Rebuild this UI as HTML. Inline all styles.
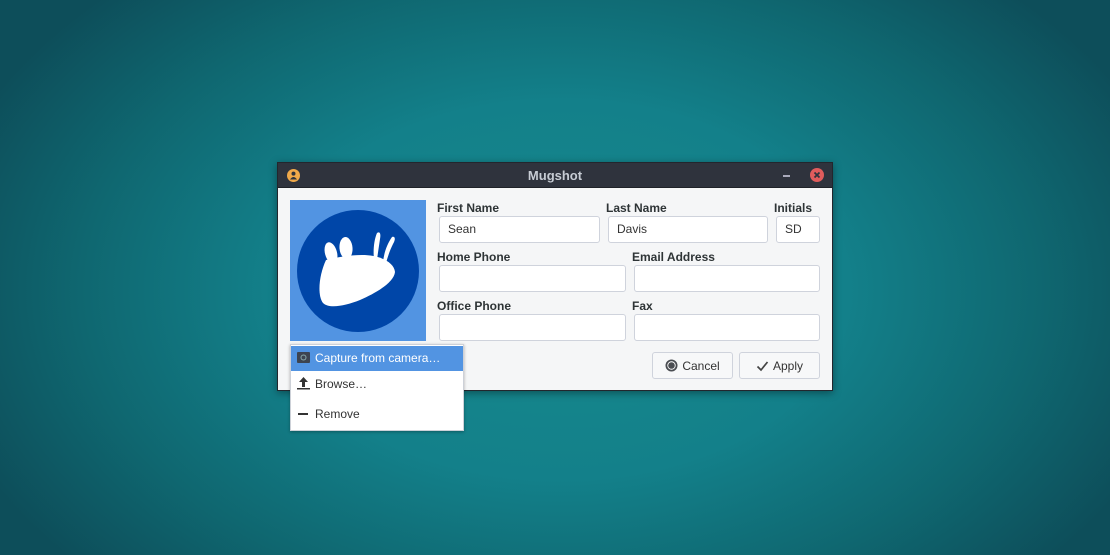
<!DOCTYPE html>
<html><head><style>
*{margin:0;padding:0;box-sizing:border-box}
body{width:1110px;height:555px;overflow:hidden;position:relative;font-family:"Liberation Sans",sans-serif;
background:radial-gradient(ellipse 640px 420px at 560px 290px,#178a8d 0%,#13808a 45%,#0f6770 75%,#0d4e5a 100%);}
.win{position:absolute;left:277px;top:162px;width:556px;height:229px;background:#f5f6f7;border:1px solid #23262d;box-shadow:0 2px 8px rgba(0,0,0,.4)}
.tb{position:absolute;left:0;top:0;width:554px;height:25px;background:#2f333d;border-bottom:1px solid #1f2228}
.tb .t{position:absolute;left:0;width:100%;top:5px;text-align:center;color:#c7ccd4;font-weight:bold;font-size:13px}
.l{position:absolute;font-size:12px;font-weight:bold;color:#2e3436}
.i{position:absolute;background:#fff;border:1px solid #cfd3dc;border-radius:3px;font-size:12px;color:#333;padding:5px 8px;height:27px}
.b{position:absolute;top:352px;height:27px;border:1px solid #cfd3dc;border-radius:3px;background:#f7f8f9;font-size:12px;color:#333;display:flex;align-items:center;justify-content:center;gap:4px}
.menu{position:absolute;left:290px;top:344px;width:174px;height:87px;background:#fff;border:1px solid #cdd1d8;box-shadow:0 1px 3px rgba(0,0,0,.3)}
.mi{position:absolute;left:0;width:172px;height:24px;font-size:12px;color:#333;padding:5px 0 0 24px}
</style></head><body>
<div class="win">
<div class="tb"><div class="t">Mugshot</div>
<svg style="position:absolute;left:9px;top:6px" width="13" height="13" viewBox="0 0 13 13"><circle cx="6.5" cy="6.5" r="6.5" fill="#f0a94a"/><circle cx="6.5" cy="4.6" r="2" fill="#2f333d"/><path d="M3 10.5 Q6.5 5.5 10 10.5Z" fill="#2f333d"/></svg>
<div style="position:absolute;left:505px;top:12px;width:7px;height:2px;background:#aab"></div>
<svg style="position:absolute;left:532px;top:5px" width="14" height="14" viewBox="0 0 14 14"><circle cx="7" cy="7" r="7" fill="#e05c5c"/><path d="M4.5 4.5L9.5 9.5M9.5 4.5L4.5 9.5" stroke="#2f333d" stroke-width="1.8"/></svg>
</div>
</div>
<div style="position:absolute;left:290px;top:200px;width:136px;height:141px;background:#5294e2"></div>
<svg style="position:absolute;left:290px;top:200px" width="136" height="141" viewBox="0 0 136 141">
<circle cx="68" cy="71" r="61" fill="#0046a8"/>
<ellipse cx="41" cy="53" rx="6" ry="11" transform="rotate(-15 41 53)" fill="#fff"/>
<ellipse cx="56" cy="48" rx="6.5" ry="11" transform="rotate(-5 56 48)" fill="#fff"/>
<path d="M36 60 C29 75 27 95 33 103 C39 109 55 106 70 100 C88 92 104 82 105 72 C104 62 90 55 72 55 C60 55 48 57 36 60Z" fill="#fff"/>
<path d="M84 60 C83 50 84 40 87 33 C90 31 91 34 90 39 C89 46 88 52 87 60Z" fill="#fff"/>
<path d="M93 62 C94 53 97 44 102 37 C105 36 106 39 103 44 C100 50 98 56 96 63Z" fill="#fff"/>
</svg>
<div class="l" style="left:437px;top:201px">First Name</div>
<div class="l" style="left:606px;top:201px">Last Name</div>
<div class="l" style="left:774px;top:201px">Initials</div>
<div class="i" style="left:439px;top:216px;width:161px">Sean</div>
<div class="i" style="left:608px;top:216px;width:160px">Davis</div>
<div class="i" style="left:776px;top:216px;width:44px">SD</div>
<div class="l" style="left:437px;top:250px">Home Phone</div>
<div class="l" style="left:632px;top:250px">Email Address</div>
<div class="i" style="left:439px;top:265px;width:187px"></div>
<div class="i" style="left:634px;top:265px;width:186px"></div>
<div class="l" style="left:437px;top:299px">Office Phone</div>
<div class="l" style="left:632px;top:299px">Fax</div>
<div class="i" style="left:439px;top:314px;width:187px"></div>
<div class="i" style="left:634px;top:314px;width:186px"></div>
<div class="b" style="left:652px;width:81px"><svg width="13" height="13" viewBox="0 0 13 13"><circle cx="6.5" cy="6.5" r="6" fill="#4a4d52"/><circle cx="6.5" cy="6.5" r="4.2" fill="#fff"/><circle cx="6.5" cy="6.5" r="3.3" fill="#4a4d52"/></svg>Cancel</div>
<div class="b" style="left:739px;width:81px"><svg width="13" height="12" viewBox="0 0 13 12"><path d="M1.5 6.5L5 10L11.5 2" stroke="#444" stroke-width="1.7" fill="none"/></svg>Apply</div>
<div class="menu">
<div class="mi" style="top:1px;background:#5294e2;color:#fff;height:25px">Capture from camera…</div>
<svg style="position:absolute;left:6px;top:6px" width="13" height="12" viewBox="0 0 13 12"><rect x="0" y="1" width="13" height="11" rx="1" fill="#3d4450"/><circle cx="6.5" cy="6.5" r="3" fill="#8aa"/><circle cx="6.5" cy="6.5" r="2" fill="#3d4450"/></svg>
<div class="mi" style="top:27px">Browse…</div>
<svg style="position:absolute;left:6px;top:31px" width="13" height="14" viewBox="0 0 13 14"><path d="M6.5 1L11 6H8V11H5V6H2Z" fill="#333"/><rect x="0" y="12" width="13" height="1.5" fill="#333"/></svg>
<div class="mi" style="top:57px">Remove</div>
<div style="position:absolute;left:7px;top:68px;width:10px;height:2px;background:#333"></div>
</div>
</body></html>
